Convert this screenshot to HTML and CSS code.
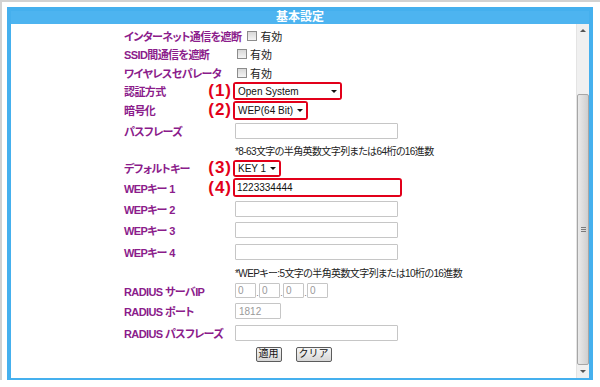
FILE: index.html
```html
<!DOCTYPE html>
<html lang="ja">
<head>
  <meta charset="UTF-8" />
  <title>基本設定</title>
  <link rel="stylesheet" href="styles.css">
</head>
<body>
  <div class="page">
    <div class="frame">
      <div class="frame-title">基本設定</div>
      <div class="panel">
        <div class="content">
          <div class="row row-s">
            <div class="label">インターネット通信を遮断</div>
            <div class="field"><label class="check"><input type="checkbox">有効</label></div>
          </div>
          <div class="row row-s">
            <div class="label">SSID間通信を遮断</div>
            <div class="field"><label class="check"><input type="checkbox">有効</label></div>
          </div>
          <div class="row row-m">
            <div class="label">ワイヤレスセパレータ</div>
            <div class="field"><label class="check"><input type="checkbox">有効</label></div>
          </div>
          <div class="row row-s">
            <div class="label">認証方式<span class="num">(1)</span></div>
            <div class="field">
              <span class="mark"><span class="select sel-auth">Open System<i class="caret"></i></span></span>
            </div>
          </div>
          <div class="row row-sel">
            <div class="label">暗号化<span class="num">(2)</span></div>
            <div class="field">
              <span class="mark"><span class="select sel-enc">WEP(64 Bit)<i class="caret"></i></span></span>
            </div>
          </div>
          <div class="row">
            <div class="label">パスフレーズ</div>
            <div class="field"><input class="text" type="text"></div>
          </div>
          <div class="row row-s">
            <div class="label"></div>
            <div class="field note">*8-63文字の半角英数文字列または64桁の16進数</div>
          </div>
          <div class="row row-s">
            <div class="label">デフォルトキー<span class="num">(3)</span></div>
            <div class="field">
              <span class="mark"><span class="select sel-key">KEY 1<i class="caret"></i></span></span>
            </div>
          </div>
          <div class="row">
            <div class="label">WEPキー 1<span class="num">(4)</span></div>
            <div class="field">
              <span class="mark"><input class="text text-marked" type="text" value="1223334444"></span>
            </div>
          </div>
          <div class="row">
            <div class="label">WEPキー 2</div>
            <div class="field"><input class="text" type="text"></div>
          </div>
          <div class="row row-l">
            <div class="label">WEPキー 3</div>
            <div class="field"><input class="text" type="text"></div>
          </div>
          <div class="row row-l">
            <div class="label">WEPキー 4</div>
            <div class="field"><input class="text" type="text"></div>
          </div>
          <div class="row row-s">
            <div class="label"></div>
            <div class="field note">*WEPキー:5文字の半角英数文字列または10桁の16進数</div>
          </div>
          <div class="row row-m">
            <div class="label">RADIUS サーバIP</div>
            <div class="field ip">
              <input class="text octet" type="text" value="0" disabled><span class="dot">.</span><input class="text octet" type="text" value="0" disabled><span class="dot">.</span><input class="text octet" type="text" value="0" disabled><span class="dot">.</span><input class="text octet" type="text" value="0" disabled>
            </div>
          </div>
          <div class="row row-l">
            <div class="label">RADIUS ポート</div>
            <div class="field"><input class="text port" type="text" value="1812" disabled></div>
          </div>
          <div class="row">
            <div class="label">RADIUS パスフレーズ</div>
            <div class="field"><input class="text" type="text"></div>
          </div>
          <div class="row row-l actions">
            <button class="btn">適用</button>
            <button class="btn">クリア</button>
          </div>
        </div>
        <div class="scrollbar">
          <div class="sb-btn"><i class="arrow-up"></i></div>
          <div class="sb-track">
            <div class="sb-thumb"><span class="grip"></span></div>
          </div>
          <div class="sb-btn"><i class="arrow-down"></i></div>
        </div>
      </div>
    </div>
  </div>
</body>
</html>
```

FILE: styles.css
```css
body {
  margin: 0;
  background: #ffffff;
  font-family: "Liberation Sans", "Noto Sans CJK JP", sans-serif;
  font-size: 11px;
  color: #222;
  font-feature-settings: "palt";
}

.page {
  border-top: 2px solid #d2d2d2;
  border-left: 2px solid #d2d2d2;
  padding: 5px 0 0 5px;
  height: 380px;
  box-sizing: border-box;
}

.frame {
  width: 586px;
  height: 375px;
  box-sizing: border-box;
  border: 4px solid #45b0ee;
  background: #ffffff;
  display: flex;
  flex-direction: column;
}

.frame-title {
  height: 13px;
  line-height: 12px;
  background: #4db4f0;
  color: #ffffff;
  font-weight: bold;
  font-size: 12px;
  text-align: center;
}

.panel {
  flex: 1;
  display: flex;
  min-height: 0;
}

.content {
  flex: 1;
  padding: 3px 0 0 113px;
}

/* form rows */
.row {
  display: flex;
  align-items: center;
  height: 21px;
}

.row-s { height: 18px; }
.row-m { height: 19px; }
.row-sel { height: 20px; }
.row-l { height: 22px; }

.label {
  flex: 0 0 111px;
  padding-right: 4px;
  box-sizing: border-box;
  display: flex;
  justify-content: space-between;
  align-items: center;
  color: #8b1c8b;
  font-weight: bold;
  letter-spacing: -0.6px;
  white-space: nowrap;
}

.num {
  color: #e2001a;
  font-size: 17px;
  font-weight: bold;
  letter-spacing: 1px;
  margin-right: -1px;
}

.field {
  display: flex;
  align-items: center;
  white-space: nowrap;
}

.note {
  color: #222;
  font-size: 10px;
  letter-spacing: -0.6px;
}

.check {
  display: flex;
  align-items: center;
  gap: 3px;
  margin-left: 2px;
}

.check input {
  appearance: none;
  margin: 0;
  width: 10px;
  height: 10px;
  border: 1px solid #8c8c8c;
  background: linear-gradient(#d8d8d8, #f4f4f4);
  box-sizing: border-box;
}

/* red annotation frame */
.mark {
  display: inline-flex;
  margin-left: -2px;
  border: 2px solid #e2001a;
  border-radius: 3px;
}

.select {
  display: flex;
  align-items: center;
  justify-content: space-between;
  box-sizing: border-box;
  padding: 0 3px 0 3px;
  background: #ffffff;
  color: #111;
  font-size: 10px;
  white-space: nowrap;
}

.sel-auth { width: 105px; height: 14px; }
.sel-enc { width: 71px; height: 15px; }
.sel-key { width: 44px; height: 13px; }

.caret {
  flex: 0 0 auto;
  margin-left: 3px;
  width: 0;
  height: 0;
  border-left: 3px solid transparent;
  border-right: 3px solid transparent;
  border-top: 3px solid #111;
}

.text {
  width: 163px;
  height: 16px;
  box-sizing: border-box;
  margin: 0;
  padding: 0 3px;
  border: 1px solid #c6c6c6;
  border-radius: 1px;
  background: #ffffff;
  font-family: inherit;
  font-size: 10px;
  color: #111;
}

.text-marked {
  width: 165px;
  height: 15px;
  border: none;
  padding: 0 2px;
}

.text:disabled {
  color: #9a9a9a;
  background: #ffffff;
}

.octet {
  width: 21px;
  height: 15px;
  padding: 0 2px;
}

.dot {
  width: 3px;
  align-self: flex-end;
  font-size: 9px;
  line-height: 9px;
  color: #777;
  text-align: center;
}

.port {
  width: 46px;
}

.actions {
  justify-content: center;
  gap: 14px;
  margin-left: -113px;
}

.btn {
  height: 15px;
  padding: 0 2px;
  border: 1px solid #5c5c5c;
  border-radius: 2px;
  background: linear-gradient(#f6f6f6, #d6d6d6);
  font-family: inherit;
  font-size: 10px;
  line-height: 12px;
  color: #111;
}

/* fake scrollbar */
.scrollbar {
  width: 12px;
  display: flex;
  flex-direction: column;
  background: #f0f0f0;
  border-left: 1px solid #e4e4e4;
}

.sb-btn {
  height: 13px;
  display: flex;
  align-items: center;
  justify-content: center;
}

.arrow-up,
.arrow-down {
  width: 0;
  height: 0;
  border-left: 3px solid transparent;
  border-right: 3px solid transparent;
}

.arrow-up { border-bottom: 3px solid #555; }
.arrow-down { border-top: 3px solid #555; }

.sb-track {
  flex: 1;
  display: flex;
  flex-direction: column;
}

.sb-thumb {
  flex: 1;
  margin-top: 57px;
  border: 1px solid #a6a6a6;
  border-radius: 2px;
  background: linear-gradient(to right, #eaeaea, #cfcfcf);
  display: flex;
  align-items: center;
  justify-content: center;
}

.grip {
  width: 5px;
  height: 5px;
  background: repeating-linear-gradient(#7a7a7a 0 1px, transparent 1px 2px);
}
```
